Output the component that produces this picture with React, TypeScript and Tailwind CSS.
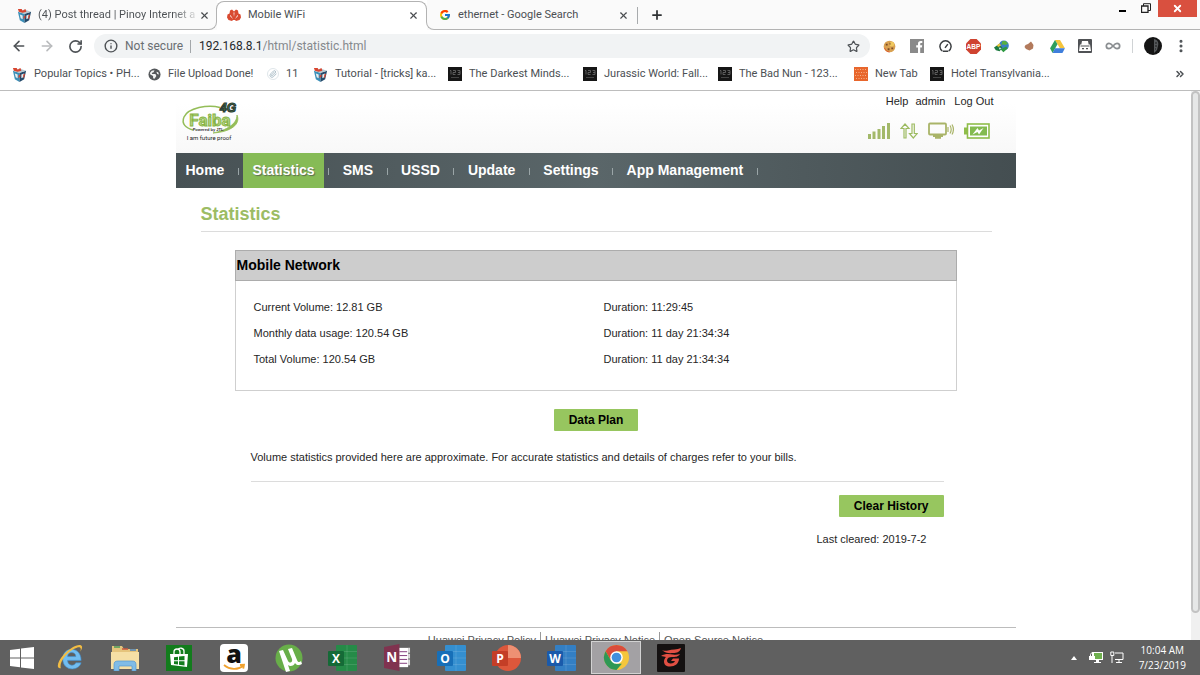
import React from "react";
import { ArrowLeft, ArrowRight, RotateCw, Info, Star, X, Plus, MoreVertical, Infinity as InfinityIcon, ChevronsRight, Paperclip } from "lucide-react";
import { FcGoogle } from "react-icons/fc";

function CubeIcon() {
  return (
    <svg viewBox="0 0 16 16" className="size-[15px] shrink-0" aria-hidden="true">
      <path d="M1 4 8 6v10l-5-3z" fill="#3b8fb8" />
      <path d="M15 4 8 6v10l5-3z" fill="#234a6b" />
      <path d="M1 4 8 1.5 15 4 8 6.5z" fill="#b9c7cf" />
      <path d="M1 1h4l1 2 3-2 1 3-4 1-4-1z" fill="#d8452f" />
      <path d="m3 7 3 1v4L4 11zM10 8l3-1-1 4-2 1z" fill="#e9eef0" />
      <path d="m12 8 2-1-1 4-1 1zM7 9l2-1v2l-2 2z" fill="#d8452f" />
    </svg>
  );
}

function HuaweiIcon() {
  return (
    <svg viewBox="0 0 14 12" className="h-[12px] w-[14px] shrink-0" aria-hidden="true" fill="#d94a31">
      <path d="M3 1.500 5 .5l2 2 2-2 2 1 .5 3 2 1 .5 3-1.500 2.500L9 12l-1-1H6l-1 1-3.500-1L0 8.500l.5-3 2-1z" />
      <path d="M6.500 3.500h1L7 8zM3.500 6l2.500 4-3-3zM10.500 6 8 10l3-3z" fill="#fff" />
    </svg>
  );
}

function Icon123() {
  return (
    <svg viewBox="0 0 14 14" className="size-[14px] shrink-0" aria-hidden="true">
      <rect width="14" height="14" fill="#161616" />
      <path d="M2 3.500h1v4M5 3.500h2.500v2H5v2h2.500M9.500 3.500h2.500v4H9.500M10 5.500h2" stroke="#6f6f6f" strokeWidth=".8" fill="none" />
      <path d="M3 10.500h8" stroke="#444" strokeWidth="1" />
    </svg>
  );
}

function OrangeIcon() {
  return (
    <svg viewBox="0 0 14 14" className="size-[14px] shrink-0" aria-hidden="true">
      <rect width="14" height="14" fill="#e8662c" />
      <path d="M1 2.500h12M2 5.500h11M1 8.500h12M2 11.500h11" stroke="#f6b088" strokeWidth="1" strokeDasharray="1 1.500" />
    </svg>
  );
}

function ClipIcon() {
  return (
    <span className="flex size-3 shrink-0 items-center justify-center rounded-full border border-[#dfe6ea]">
      <Paperclip className="size-2 text-[#8fa7b5]" />
    </span>
  );
}

function GlobeIcon() {
  return (
    <svg viewBox="0 0 14 14" className="size-[13px] shrink-0" aria-hidden="true">
      <circle cx="7" cy="7" r="6.500" fill="#55585b" />
      <path d="M2 5.500 4 3l3-.5-1 2-2 1 .5 1H8l1 2-2 3-1.500-.5V8.500L2.500 7z" fill="#f2f3f3" />
      <path d="m9 4 2 .5.800 2.500-1.800-.5z" fill="#f2f3f3" />
    </svg>
  );
}

const bookmarks = [
  { label: "Popular Topics • PH...", icon: <CubeIcon />, width: "w-[136px]" },
  { label: "File Upload Done!", icon: <GlobeIcon />, width: "w-[119px]" },
  { label: "11", icon: <ClipIcon />, width: "w-[46px]" },
  { label: "Tutorial - [tricks] ka...", icon: <CubeIcon />, width: "w-[135px]" },
  { label: "The Darkest Minds...", icon: <Icon123 />, width: "w-[135px]" },
  { label: "Jurassic World: Fall...", icon: <Icon123 />, width: "w-[135px]" },
  { label: "The Bad Nun - 123...", icon: <Icon123 />, width: "w-[136px]" },
  { label: "New Tab", icon: <OrangeIcon />, width: "w-[76px]" },
  { label: "Hotel Transylvania...", icon: <Icon123 />, width: "w-[120px]" },
];

function CloseTab() {
  return (
    <button type="button" aria-label="Close tab" className="flex size-4 shrink-0 items-center justify-center text-[#4a4d50]">
      <X className="size-[11px]" strokeWidth={2.5} />
    </button>
  );
}

function TabStrip() {
  return (
    <div className="flex h-[30px] shrink-0 bg-[#fafafa] text-[11px] text-[#4b4f53]">
      <div className="relative flex w-[217px] shrink-0 items-center pl-[17px] pr-[5px]">
        <span className="absolute inset-x-0 bottom-0 h-[22px] rounded-br-[8px] border-b border-r border-[#b3b3b3]" />
        <CubeIcon />
        <span className="ml-[6px] flex-1 whitespace-nowrap bg-gradient-to-r from-[#4b4f53] from-85% to-[#dddddd] bg-clip-text text-transparent">
          (4) Post thread | Pinoy Internet a
        </span>
        <CloseTab />
      </div>
      <div className="relative flex w-[210px] shrink-0 items-center bg-white pl-[10px] pr-[6px]">
        <span className="absolute -left-px right-0 top-px h-[8px] rounded-t-[8px] border-x border-t border-[#b3b3b3]" />
        <HuaweiIcon />
        <span className="ml-[7px] flex-1">Mobile WiFi</span>
        <CloseTab />
      </div>
      <div className="relative flex w-[210px] shrink-0 items-center pl-[12px] pr-[6px]">
        <span className="absolute -left-px right-0 bottom-0 h-[22px] rounded-bl-[8px] border-b border-l border-[#b3b3b3]" />
        <FcGoogle className="size-[12px]" />
        <span className="ml-[7px] flex-1">ethernet - Google Search</span>
        <CloseTab />
      </div>
      <div className="flex flex-1 border-b border-[#b3b3b3]">
        <span className="mt-[7px] h-[17px] w-px bg-[#a8abad]" />
        <button type="button" aria-label="New tab" className="ml-[12px] flex h-[30px] w-[14px] items-center text-[#2f3234]">
          <Plus className="size-[14px]" strokeWidth={3} />
        </button>
        <div className="ml-auto flex pr-[3px]">
          <button type="button" aria-label="Minimize" className="flex h-4 w-[24px] items-center justify-center">
            <span className="mt-[5px] h-[2px] w-[7px] bg-black" />
          </button>
          <button type="button" aria-label="Restore" className="flex h-4 w-[24px] items-center justify-center">
            <svg viewBox="0 0 10 10" className="size-[10px]" fill="none" stroke="#222" aria-hidden="true">
              <path d="M.5 3h6.500v6.500H.5z" strokeWidth="1.300" />
              <path d="M2.500 3V.7h7V7.500H7" />
            </svg>
          </button>
          <button type="button" aria-label="Close" className="flex h-[17px] w-[39px] items-center justify-center bg-[#d9503f] text-white">
            <X className="size-[11px]" strokeWidth={4} />
          </button>
        </div>
      </div>
    </div>
  );
}

function Ext({ label, children }: { label: string; children: React.ReactNode }) {
  return (
    <button type="button" aria-label={label} className="flex h-7 w-7 items-center justify-center">
      {children}
    </button>
  );
}

function Toolbar() {
  return (
    <div className="flex h-[32px] shrink-0 items-center bg-white pl-[5px] pr-[11px] text-[#4e5256]">
      <button type="button" aria-label="Back" className="flex w-7 justify-center"><ArrowLeft className="size-4" strokeWidth={2.4} /></button>
      <button type="button" aria-label="Forward" className="flex w-7 justify-center text-[#b9bbbd]"><ArrowRight className="size-4" strokeWidth={2.4} /></button>
      <button type="button" aria-label="Reload" className="flex w-7 justify-center"><RotateCw className="size-[15px]" strokeWidth={2.6} /></button>
      <div className="ml-[5px] flex h-6 flex-1 items-center rounded-full bg-[#f1f3f4] pl-[10px] pr-[10px] text-[12px]">
        <Info className="size-[14px]" strokeWidth={2.4} />
        <span className="ml-[7px] text-[#6a6e72]">Not secure</span>
        <span className="ml-[7px] mr-[8px] h-[13px] w-px bg-[#a3a7aa]" />
        <label htmlFor="address" className="text-[#25282b]">192.168.8.1</label>
        <input id="address" type="text" defaultValue="/html/statistic.html" className="min-w-0 flex-1 bg-transparent text-[#85898d] outline-none" />
        <button type="button" aria-label="Bookmark this page"><Star className="size-[13px]" strokeWidth={2.2} /></button>
      </div>
      <div className="ml-[5px] flex items-center">
        <Ext label="Cookies">
          <svg viewBox="0 0 14 14" className="size-[13px]"><circle cx="7" cy="7" r="6.300" fill="#d9a252" /><circle cx="9.500" cy="4.500" r="2.500" fill="#f0c95f" /><path d="M3 4h2v2H3zM5 9h2v2H5zM9 8h2v2H9zM7 3h1v2H7z" fill="#7b4a26" /><path d="M1.500 8.500 4 12l3 1" stroke="#e0552e" fill="none" /></svg>
        </Ext>
        <Ext label="Facebook">
          <svg viewBox="0 0 14 14" className="size-[14px]"><path d="M0 0h14v14H0z" fill="#8a8a8a" /><path d="M8 14V8.500H6.200V6.300H8V4.800C8 3 9 2 10.800 2h1.500v2.100h-1.100c-.8 0-1 .4-1 1v1.200h2l-.3 2.200h-1.700V14z" fill="#fff" /></svg>
        </Ext>
        <Ext label="Speed">
          <svg viewBox="0 0 14 14" className="size-[13px]" fill="none" stroke="#3c3f42" strokeWidth="1.600"><path d="M3.500 11.800a6 6 0 1 1 7 0" /><path d="M6.500 8.500 9.500 4.500M4 12h6" /></svg>
        </Ext>
        <Ext label="Ad block">
          <svg viewBox="0 0 16 16" className="size-[15px]"><path d="M4.700 0h6.600L16 4.700v6.600L11.300 16H4.700L0 11.300V4.700z" fill="#cf4330" /><text x="8" y="10.600" textAnchor="middle" fontSize="7" fontWeight="700" fontFamily="Liberation Sans" fill="#fff">ABP</text></svg>
        </Ext>
        <Ext label="Download manager">
          <svg viewBox="0 0 16 16" className="size-[15px]"><circle cx="10.500" cy="7" r="5.300" fill="#3b7fc4" /><path d="M9 2 12.500 2l2.500 3-3 1.500-2-1-2 1z" fill="#58b040" /><path d="M0 9 5 5.500l4 3.500-3 4-4-1z" fill="#1d7a40" /><path d="m7 11 6-3 1.500 2-4.500 4z" fill="#2f9a42" /><path d="m3 7 3-2.500L7.500 7l-3 1.500z" fill="#e9c33b" /><path d="m5 9 3 .5-2 2z" fill="#d4e9f5" /></svg>
        </Ext>
        <Ext label="Potato"><svg viewBox="0 0 10 10" className="size-[10px]"><path d="M1.500 4 4 3l3-2.500L9.500 4 9 7.500 5.500 9.500 2 8 .5 6z" fill="#b27a5c" /></svg></Ext>
        <Ext label="Drive">
          <svg viewBox="0 0 16 14" className="h-[13px] w-[15px]"><path d="M5.300 0h5.400L16 9h-5.400z" fill="#f5c43a" /><path d="M5.300 0 8 4.600 2.700 14 0 9z" fill="#2f9e5b" /><path d="M5.400 9H16l-2.700 5H2.700z" fill="#3f7fdc" /></svg>
        </Ext>
        <Ext label="Incognito">
          <svg viewBox="0 0 14 14" className="size-[14px]"><rect width="14" height="14" rx="1" fill="#505255" /><path d="M4 2h6l.7 3.500H12L13 12H1l1-6.500h1.300z" fill="#fff" /><path d="M2.500 6.500h9v1h-9zM4 9h2v1.300H4zM8 9h2v1.300H8z" fill="#505255" /></svg>
        </Ext>
        <Ext label="Loop"><InfinityIcon className="size-4 text-[#8a8e91]" strokeWidth={2.6} /></Ext>
      </div>
      <span className="ml-[5px] h-[14px] w-px bg-[#d0d3d5]" />
      <button type="button" aria-label="Profile" className="ml-[11px]">
        <svg viewBox="0 0 18 18" className="size-[18px]"><circle cx="9" cy="9" r="9" fill="#141414" /><path d="M10 2c4 1 5 4 4 7l-1 4-3 3z" fill="#55585a" /><path d="M11 6h2M11 9h2M11 12h1" stroke="#1b1b1b" /></svg>
      </button>
      <button type="button" aria-label="Menu" className="ml-[11px]"><MoreVertical className="size-[16px]" strokeWidth={2.6} /></button>
    </div>
  );
}

function Bookmarks() {
  return (
    <nav aria-label="Bookmarks" className="flex h-[29px] shrink-0 items-center border-b border-[#bdbdbd] bg-white pb-[4px] pl-[12px] pr-[14px] text-[11px] text-[#4b4f53]">
      {bookmarks.map((b) => (
        <a key={b.label} href="#bookmark" className={`flex shrink-0 items-center gap-[7px] whitespace-nowrap ${b.width}`}>
          {b.icon}
          {b.label}
        </a>
      ))}
      <button type="button" aria-label="More bookmarks" className="ml-auto"><ChevronsRight className="size-[12px]" strokeWidth={3} /></button>
    </nav>
  );
}

function FaibaLogo() {
  return (
    <svg viewBox="0 0 60 42" className="h-[42px] w-[60px]" role="img" aria-label="Faiba 4G">
      <path d="M40 5.500C28 2 8 6 4 15c-3 7 2 11 9 13" fill="none" stroke="#94bd58" strokeWidth="1.500" />
      <path d="M57 13c4 9-6 17-24 18 14-3 24-9 24-18z" fill="#94bd58" stroke="#94bd58" strokeWidth=".8" />
      <text x="30" y="24" textAnchor="middle" fontFamily="Roboto" fontSize="17" fontWeight="700" fill="#b5d485" stroke="#86b344" strokeWidth=".9">Faiba</text>
      <text x="48" y="10" textAnchor="middle" fontFamily="Liberation Sans" fontSize="12" fontWeight="700" fontStyle="italic" fill="#4f8a45" stroke="#2b3b33" strokeWidth="1.100">4G</text>
      <text x="28" y="29" textAnchor="middle" fontFamily="Liberation Sans" fontSize="4" fontWeight="700" fill="#333">Powered by JTL</text>
      <text x="29" y="38" textAnchor="middle" fontFamily="Roboto" fontSize="6" fill="#222">I am future proof</text>
    </svg>
  );
}

function StatusIcons() {
  return (
    <div className="flex items-center gap-[10px] text-[#9dbb61]">
      <svg viewBox="0 0 22 16" className="h-4 w-[22px]" role="img" aria-label="Signal" fill="#a3b96a"><path d="M0 11h3v5H0zM4.500 8.500h3V16h-3zM9.500 6h3v10h-3zM14 3h3v13h-3zM19 0h3v16h-3z" /></svg>
      <svg viewBox="0 0 18 16" className="h-4 w-[18px]" role="img" aria-label="Traffic" fill="none" stroke="currentColor" strokeWidth="1.200"><path d="M4 15V5.500H1L5 1l4 4.500H6V15zM12 1v9.500H9.500l3.800 4.500 4-4.500h-3V1z" /></svg>
      <svg viewBox="0 0 26 17" className="h-[17px] w-[26px]" role="img" aria-label="Connected devices" fill="none" stroke="#a9b468"><rect x="1" y="1.500" width="17" height="11" rx="1" strokeWidth="1.800" /><path d="M5 14h10M7 15.800h6" strokeWidth="1.800" /><path d="M20 5v5M22 3.500c1.500 2.500 1.500 5.500 0 8M24 2.500c2 3.500 2 6.500 0 10" strokeWidth="1.200" /></svg>
      <svg viewBox="0 0 26 16" className="h-4 w-[26px]" role="img" aria-label="Battery"><path d="M0 4.500h3v7H0z" fill="#8fbd4a" /><rect x="3.500" y="1" width="21.500" height="14" fill="#fff" stroke="#8fbd4a" strokeWidth="1.600" /><path d="M6 3.500h17v9H6z" fill="#84bb50" /><path d="M8.500 11.500 13.500 5l1.500 2.500 4.500-2.500-4.500 6.500-1.500-2.500z" fill="#fff" /></svg>
    </div>
  );
}

const menu = ["Home", "Statistics", "SMS", "USSD", "Update", "Settings", "App Management"];

const usage = [
  ["Current Volume: 12.81 GB", "Duration: 11:29:45"],
  ["Monthly data usage: 120.54 GB", "Duration: 11 day 21:34:34"],
  ["Total Volume: 120.54 GB", "Duration: 11 day 21:34:34"],
];

function StatisticsPage() {
  return (
    <div className="mx-auto w-full max-w-[840px] font-['Liberation_Sans',Arial,sans-serif] text-[11px] leading-4 text-[#262626]">
      <header className="flex h-[62px] justify-between bg-gradient-to-b from-white from-20% to-[#f8f8f8] pl-[4px] pr-[22px]">
        <div className="pt-[11px]"><FaibaLogo /></div>
        <div className="flex flex-col items-end pt-[2px]">
          <div className="flex gap-[7px]">
            <a href="#help">Help</a>
            <a href="#admin">admin</a>
            <a href="#logout" className="ml-[2px]">Log Out</a>
          </div>
          <div className="mt-[13px] mr-[4px]"><StatusIcons /></div>
        </div>
      </header>
      <nav aria-label="Main" className="flex h-[35px] bg-gradient-to-r from-[#475154] via-[#5a6669] to-[#444e51] pl-px text-[14px] font-bold text-white">
        {menu.map((item) => (
          <React.Fragment key={item}>
            <a href="#section" className={item === "Statistics" ? "flex items-center bg-[#86bb56] px-[9px] pb-[2px] [text-shadow:1px_1px_1px_#5c6d50]" : "flex items-center px-[9px] pb-[2px]"}>{item}</a>
            <span className="flex w-[10px] items-center justify-center"><span className="mt-px h-[7px] w-px bg-[#9aa5a7]" /></span>
          </React.Fragment>
        ))}
      </nav>
      <main className="pl-[25px] pr-[24px]">
        <h1 className="border-b border-[#dcdcdc] pb-[7px] pt-[16px] text-[18px] font-bold leading-5 text-[#9cbc64]">Statistics</h1>
        <section className="ml-[34px] mr-[35px] mt-[18px] border border-[#cfcfcf]">
          <h2 className="h-[29px] border-b border-[#cdcdcd] bg-[#cdcdcd] text-[14px] font-bold leading-7 text-black outline outline-[#acacac]">
            <span className="pl-px">Mobile Network</span>
          </h2>
          <div className="px-[18px] pb-[18px] pt-[14px]">
            <table className="w-full table-fixed">
              <tbody>
                {usage.map((row) => (
                  <tr key={row[0]} className="h-[26px]">
                    <td>{row[0]}</td>
                    <td className="pl-[8px]">{row[1]}</td>
                  </tr>
                ))}
              </tbody>
            </table>
          </div>
        </section>
        <div className="mt-[18px] flex justify-center">
          <button type="button" className="h-[22px] rounded-[1px] bg-[#97c65f] px-[15px] text-[12px] font-bold text-black">Data Plan</button>
        </div>
        <div className="ml-[50px] mr-[48px]">
          <p className="border-b border-[#dcdcdc] pb-[16px] pt-[18px]">
            Volume statistics provided here are approximate. For accurate statistics and details of charges refer to your bills.
          </p>
          <div className="flex flex-col items-end pt-[13px]">
            <button type="button" className="h-[22px] rounded-[1px] bg-[#97c65f] px-[15px] text-[12px] font-bold text-black">Clear History</button>
            <p className="mr-[17px] mt-[14px]">Last cleared: 2019-7-2</p>
          </div>
        </div>
      </main>
      <footer className="mt-[80px] flex justify-center border-t border-[#bcbcbc] pt-[4px] text-[#555]">
        <a href="#policy" className="border-r border-[#999] pr-1">Huawei Privacy Policy</a>
        <a href="#notice" className="border-r border-[#999] px-1">Huawei Privacy Notice</a>
        <a href="#open-source" className="pl-1">Open Source Notice</a>
      </footer>
    </div>
  );
}

function OfficeIcon({ letter, back, front }: { letter: string; back: string; front: string }) {
  return (
    <svg viewBox="0 0 30 26" className="h-[26px] w-[30px]" aria-hidden="true">
      <rect x="8" width="21" height="26" rx="1" fill={back} />
      <path d="M8 6.500h21M8 13h21M8 19.500h21M19 0v26" stroke="#fff" strokeOpacity=".12" />
      <rect y="6" width="16" height="15" rx="1" fill={front} />
      <text x="8" y="18" textAnchor="middle" fontFamily="Open Sans" fontWeight="700" fontSize="12" fill="#fff">{letter}</text>
    </svg>
  );
}

const apps = [
  { name: "Internet Explorer", icon: (
    <svg viewBox="0 0 30 30" className="size-[29px]"><path fillRule="evenodd" d="M26 18H12c0 5.500 7 6.500 8.500 2.500H26C23 30 7 29 7 16.500 7 3 26 3 26 18zm-14-4h8.500c0-5.500-8.500-5.500-8.500 0z" fill="#72bdf0" stroke="#3f8fd0" strokeWidth=".6" /><path d="M5 26C0 27 1 20 8 12 15 4 26-1 27 4c0 2-1 4-2 5 2-5-1-6-6-3C11 10 3 20 5 26z" fill="#f2bd44" /></svg>) },
  { name: "File Explorer", icon: (
    <svg viewBox="0 0 30 26" className="h-[26px] w-[30px]"><path d="M2 1h10l2 3h14v20H2z" fill="#e5c47c" /><path d="M4 2h6" stroke="#4a9b5b" strokeWidth="1.500" /><path d="M12 4h6" stroke="#c9573e" strokeWidth="1.500" /><path d="M20 5h6" stroke="#4a85c0" strokeWidth="1.500" /><path d="M1 7h28v17H1z" fill="#f5dfa5" /><path d="M4 26v-6c0-3 1-4 4-4h14c3 0 4 1 4 4v6h-4v-5H9v5z" fill="#80bce6" stroke="#5498cf" strokeWidth=".7" /></svg>) },
  { name: "Store", icon: (
    <svg viewBox="0 0 26 26" className="size-[26px]"><path d="M0 0h26v26H0z" fill="#127c1c" /><path d="M4 9h18l-1 13-16-2z" fill="#fff" /><path d="M8 9V7c0-4 6-4 6 0v2M12 5c1-3 6-2 6 1v3" stroke="#fff" strokeWidth="1.300" fill="none" /><path d="m8 12.300 4-.5v3.400H8zm5-.7 5.500-.6v4.200H13zM8 16.200h4v3.400l-4-.5zm5 0h5.500v4.200l-5.500-.6z" fill="#127c1c" /></svg>) },
  { name: "Amazon", icon: (
    <svg viewBox="0 0 28 28" className="size-[28px]"><rect width="28" height="28" rx="4" fill="#fff" /><text x="14" y="19" textAnchor="middle" fontFamily="Open Sans" fontWeight="800" fontSize="25" fill="#111">a</text><path d="M4 21c6 5 14 5 19 1M20 21l4-.3-.7 4" fill="none" stroke="#f1a22e" strokeWidth="1.800" /></svg>) },
  { name: "uTorrent", icon: (
    <svg viewBox="0 0 28 28" className="size-[28px]"><circle cx="14" cy="14" r="13.500" fill="#68ae49" /><path d="M4 7l4-1 5 11c2 3 5 1 4-2l-4-10 4-1 5 12c1 3 3 2 4 1l1 3c-3 2-6 1-7-1-1 3-5 4-7 2l2 6-4 1z" fill="#fff" /></svg>) },
  { name: "Excel", icon: <OfficeIcon letter="X" back="#258b48" front="#156a37" /> },
  { name: "OneNote", icon: (
    <svg viewBox="0 0 28 28" className="size-[27px]"><path d="M13 4h12v20H13z" fill="#fff" /><path d="M25 4h2v5h-2zM25 10h2v5h-2zM25 16h2v6h-2z" fill="#ddd" /><path d="M16 8h8M16 12h8M16 16h8M16 20h8" stroke="#80397b" /><path d="M0 3 16 0v28L0 25z" fill="#80334f" /><text x="8" y="19" textAnchor="middle" fontFamily="Open Sans" fontWeight="700" fontSize="14" fill="#fff">N</text></svg>) },
  { name: "Outlook", icon: <OfficeIcon letter="O" back="#348fd0" front="#176fb8" /> },
  { name: "PowerPoint", icon: (
    <svg viewBox="0 0 30 26" className="h-[26px] w-[30px]"><circle cx="16" cy="13" r="13" fill="#dd573b" /><path d="M16 0a13 13 0 0 1 13 13H16z" fill="#ee9073" /><rect y="6" width="16" height="15" rx="1" fill="#c43e27" /><text x="8" y="18" textAnchor="middle" fontFamily="Open Sans" fontWeight="700" fontSize="12" fill="#fff">P</text></svg>) },
  { name: "Word", icon: <OfficeIcon letter="W" back="#337fc4" front="#1a5aab" /> },
  { name: "Chrome", icon: (
    <svg viewBox="0 0 28 28" className="size-[27px]"><circle cx="14" cy="14" r="13" fill="#f5c63c" /><path d="M2.700 7.500A13 13 0 0 1 25.300 7.500H14L8.400 17.300z" fill="#da4c3b" /><path d="M2.700 7.500 8.400 17.300 14 20.500h5.600L14 27A13 13 0 0 1 2.700 7.500z" fill="#2e9855" /><circle cx="14" cy="14" r="6.500" fill="#fff" /><circle cx="14" cy="14" r="5" fill="#428fdd" /></svg>) },
  { name: "Garena", icon: (
    <svg viewBox="0 0 28 28" className="size-[28px]"><rect width="28" height="28" rx="1" fill="#141111" /><path d="M5 6c2 1 4 1 6 .5C15 5 20 6 24 4c-1 4-4 5-8 5-4 .5-8 0-11-3z" fill="#e14f43" /><path d="M4 12c4-3 9-2 12-1.500 3 .5 5 0 7-.5-2 3-5 3-8 3-3 0-5 1-5 3.500 0 3 4 4 7 2l1-1.500h-4l2-2.500h6c0 5-4 8-9 8-4 0-6-2-6-5 0-2 1-3.500 2-4.500-1.500-.5-3-.5-5-1z" fill="#e14f43" /></svg>) },
];

function Taskbar() {
  return (
    <footer className="flex h-[35px] shrink-0 items-center bg-[#606060] font-['Open_Sans',sans-serif] text-white">
      <button type="button" aria-label="Start" className="flex h-full w-[43px] items-center justify-center">
        <svg viewBox="0 0 24 22" className="h-[22px] w-6" fill="#fff"><path d="M0 3 10 1.700v8.800H0zM11 1.600 24 0v10.500H11zM0 11.500h10v8.800L0 19zM11 11.500h13V22l-13-1.600z" /></svg>
      </button>
      <div className="grid h-full w-[655px] grid-cols-12">
        {apps.map((a) => (
          <button key={a.name} type="button" aria-label={a.name} className={a.name === "Chrome" ? "mx-[2px] mb-px mt-px flex items-center justify-center border border-[#d2d2d2] bg-[#a3a1a4]" : "flex items-center justify-center"}>
            {a.icon}
          </button>
        ))}
      </div>
      <div className="ml-auto flex items-center pr-[14px]">
        <svg viewBox="0 0 6 4" className="h-[4px] w-[6px]" aria-hidden="true"><path d="M0 4 3 0l3 4z" fill="#fff" /></svg>
        <svg viewBox="0 0 14 13" className="ml-[12px] h-[13px] w-[14px]" aria-hidden="true"><path d="M3 1h11v8H3z" fill="#fff" /><path d="M5 2h8v6H5z" fill="#6fb04f" /><path d="M7 9h3v2h2v1H5v-1h2zM0 5h6v4H0z" fill="#fff" /><path d="M1.500 5V3.500c0-2 3-2 3 0V5" stroke="#fff" fill="none" /></svg>
        <svg viewBox="0 0 14 13" className="ml-[7px] h-[13px] w-[14px]" fill="none" stroke="#fff" aria-hidden="true"><path d="M5 2h8v6.500H5M9 9v2.500M6 11.500h6M2 5v7" /><path d="M.8 1h3v3.500h-3z" /></svg>
        <div className="ml-[15px] text-center text-[10px] leading-[15px]">
          <div>10:04 AM</div>
          <div>7/23/2019</div>
        </div>
      </div>
    </footer>
  );
}

export default function App() {
  return (
    <div className="flex h-screen flex-col overflow-hidden bg-white font-[Roboto,'Open_Sans',sans-serif]">
      <TabStrip />
      <Toolbar />
      <Bookmarks />
      <div className="flex min-h-0 flex-1">
        <div className="min-w-0 flex-1 overflow-hidden">
          <StatisticsPage />
        </div>
        <div className="flex w-[9px] flex-col bg-[#f0f0f0]" aria-hidden="true">
          <div className="h-[95%] rounded-full border-2 border-[#c2c2c2] bg-[#e6e7e7]" />
        </div>
      </div>
      <Taskbar />
    </div>
  );
}
